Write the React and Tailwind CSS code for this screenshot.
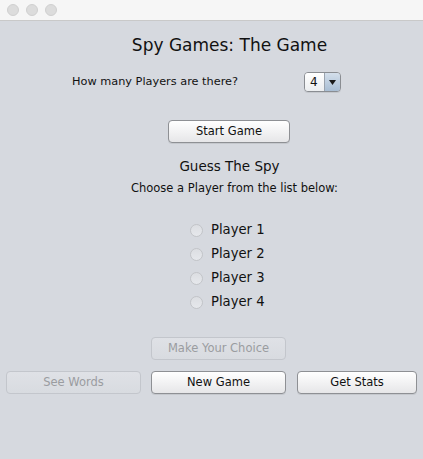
import React from "react";

const font = { fontFamily: '"DejaVu Sans", "Liberation Sans", sans-serif' };

function Btn({ children, className = "", disabled }) {
  return (
    <div
      className={
        "flex items-center justify-center h-[23px] rounded-[4px] border text-[11.5px] " +
        (disabled
          ? "border-[#c3c6cc] bg-gradient-to-b from-[#dfe1e6] to-[#d8dbe0] text-[#9a9ca0] "
          : "border-[#8e9094] bg-gradient-to-b from-[#ffffff] to-[#e6e6e8] text-[#111] shadow-[0_1px_0_rgba(0,0,0,0.08)] ") +
        className
      }
    >
      {children}
    </div>
  );
}

function Radio({ label }) {
  return (
    <div className="flex items-center h-[24px]">
      <div className="w-[13px] h-[13px] rounded-full border border-[#c2c4c8] bg-gradient-to-b from-[#dcdee2] to-[#e6e8ec]" />
      <span className="ml-[8px] text-[13.2px] text-[#111]">{label}</span>
    </div>
  );
}

export default function App() {
  return (
    <div className="w-[423px] h-[459px] bg-[#d6d9df] flex flex-col overflow-hidden" style={font}>
      <div className="h-[21px] bg-[#f6f6f6] border-b border-[#c9c9c9] flex items-center pl-[7px] gap-[7px] shrink-0">
        <div className="w-[12px] h-[12px] rounded-full bg-[#dcdcdc] border border-[#d0d0d0]" />
        <div className="w-[12px] h-[12px] rounded-full bg-[#dcdcdc] border border-[#d0d0d0]" />
        <div className="w-[12px] h-[12px] rounded-full bg-[#dcdcdc] border border-[#d0d0d0]" />
      </div>

      <div className="mt-[14px] h-[22px] flex justify-center pl-[36px] items-center text-[17px] text-[#111]">
        Spy Games: The Game
      </div>

      <div className="mt-[15px] h-[20px] flex items-center">
        <span className="ml-[72px] text-[11.3px] text-[#111]">How many Players are there?</span>
        <div className="ml-auto mr-[82px] w-[37px] h-[20px] rounded-[4px] border border-[#8a8d92] flex overflow-hidden shadow-[0_1px_0_rgba(0,0,0,0.08)]">
          <div className="flex-1 bg-gradient-to-b from-[#ffffff] to-[#eceef0] flex items-center pl-[5px] text-[12px] text-[#111]">4</div>
          <div className="w-[16px] border-l border-[#9aa3ae] bg-gradient-to-b from-[#d4dfeb] to-[#a9bed4] flex items-center justify-center">
            <svg width="7" height="5" viewBox="0 0 7 5"><path d="M0 0h7L3.5 5z" fill="#1a1a1a" /></svg>
          </div>
        </div>
      </div>

      <div className="mt-[28px] flex">
        <Btn className="ml-[168px] w-[122px]">Start Game</Btn>
      </div>

      <div className="mt-[14px] h-[18px] flex items-center justify-center pl-[36px] text-[13.5px] text-[#111]">
        Guess The Spy
      </div>
      <div className="mt-[6px] h-[16px] flex items-center justify-center pl-[46px] text-[11.5px] text-[#111]">
        Choose a Player from the list below:
      </div>

      <div className="mt-[21px] flex flex-col ml-[190px]">
        <Radio label="Player 1" />
        <Radio label="Player 2" />
        <Radio label="Player 3" />
        <Radio label="Player 4" />
      </div>

      <div className="mt-[23px] flex">
        <Btn disabled className="ml-[151px] w-[135px]">Make Your Choice</Btn>
      </div>

      <div className="mt-[11px] flex">
        <Btn disabled className="ml-[6px] w-[135px]">See Words</Btn>
        <Btn className="ml-[10px] w-[135px]">New Game</Btn>
        <Btn className="ml-[11px] w-[120px]">Get Stats</Btn>
      </div>
    </div>
  );
}
